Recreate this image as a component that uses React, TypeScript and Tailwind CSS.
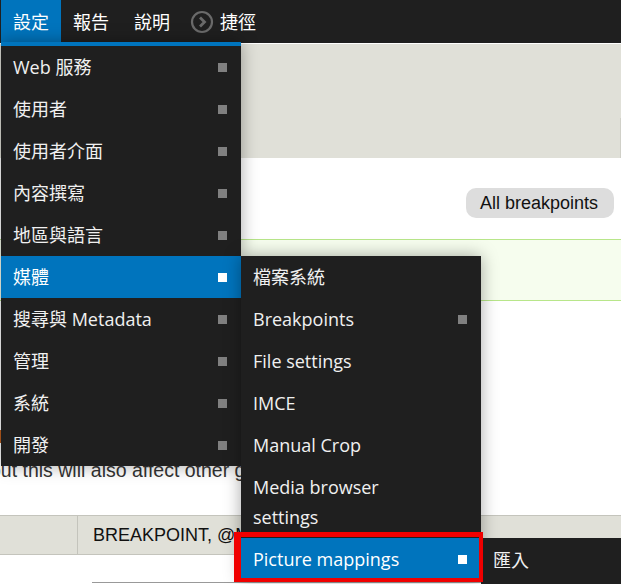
const font = "font-['Open_Sans','Noto_Sans_CJK_TC',sans-serif]";

const mainMenu = [
  { name: 'Web 服務', more: true },
  { name: '使用者', more: true },
  { name: '使用者介面', more: true },
  { name: '內容撰寫', more: true },
  { name: '地區與語言', more: true },
  { name: '媒體', more: true, active: true },
  { name: '搜尋與 Metadata', more: true },
  { name: '管理', more: true },
  { name: '系統', more: true },
  { name: '開發', more: true },
];

const mediaMenu = [
  { name: '檔案系統' },
  { name: 'Breakpoints', more: true },
  { name: 'File settings' },
  { name: 'IMCE' },
  { name: 'Manual Crop' },
  { name: 'Media browser settings' },
  { name: 'Picture mappings', more: true, active: true },
];

function MenuItem({ name, more, active }: { name: string; more?: boolean; active?: boolean }) {
  return (
    <div className={`flex items-center justify-between pl-3 pr-[14px] py-[6px] text-[18px] leading-[30px] text-[#f0f0f0] ${active ? 'bg-[#0074bd] text-white' : ''}`}>
      <span className="max-w-[190px]">{name}</span>
      {more && <span className={`size-[9px] shrink-0 ${active ? 'bg-white' : 'bg-[#808080]'}`} />}
    </div>
  );
}

export default function App() {
  return (
    <div className="relative h-[584px] overflow-hidden bg-white font-['Liberation_Sans',sans-serif] text-[18px] text-[#111]">
      {/* Toolbar */}
      <div className={`flex h-[43px] items-start bg-[#1f1f1f] pl-px text-[18px] leading-[44px] text-white ${font}`}>
        <div className="h-[42px] w-[60px] bg-[#0074bd] text-center">設定</div>
        <div className="ml-3">報告</div>
        <div className="ml-[25px]">說明</div>
        <svg className="ml-[20px] mt-[10px]" width="24" height="24" viewBox="0 0 24 24" fill="none" stroke="#6a6a6a">
          <circle cx="12" cy="12" r="10" strokeWidth="2.2" />
          <path d="M10 7.5l4.5 4.5-4.5 4.5" strokeWidth="2.8" />
        </svg>
        <div className="ml-[6px]">捷徑</div>
      </div>

      {/* Page behind the menus */}
      <div className="mt-px flex h-[114px] items-end justify-end bg-[#e0e0d8]">
        <div className="h-[40px] w-px bg-[#d0d0c8]" />
      </div>
      <div className="flex justify-end pt-[30px] pr-[7px]">
        <div className="flex h-[30px] w-[148px] items-center justify-center rounded-[10px] bg-[#dddddd] pr-[2px]">All breakpoints</div>
      </div>
      <div className="mt-[21px] h-[62px] border-y border-[#b8e68a] bg-[#f6fdee]" />
      <div className="mt-[129px] h-[13px] w-px bg-[#c06020]" />
      <div className="mt-[15px] -ml-[10px] w-[640px] whitespace-nowrap text-[19.5px] leading-[24px] text-[#333]">but this will also affect other groups</div>
      <div className="mt-[33px] flex h-[40px] items-center border-y border-[#c4c4bc] bg-[#e0e0d8]">
        <div className="h-full w-[78px] border-r border-[#c4c4bc]" />
        <div className="pl-[15px]">BREAKPOINT, @MEDIA</div>
      </div>
      <div className="ml-[92px] mt-[27px] border-t border-[#999]" />

      {/* Dropdown */}
      <div className={`absolute left-px top-[42px] w-[240px] border-t-4 border-[#0074bd] bg-[#1f1f1f] shadow-[0_0_16px_rgba(0,0,0,0.35)] ${font}`}>
        {mainMenu.map((item) => (
          <MenuItem key={item.name} {...item} />
        ))}
      </div>

      {/* Media submenu */}
      <div className={`absolute left-[241px] top-[256px] w-[240px] bg-[#1f1f1f] shadow-[0_0_16px_rgba(0,0,0,0.35)] ${font}`}>
        {mediaMenu.map((item) => (
          <MenuItem key={item.name} {...item} />
        ))}
      </div>

      {/* Third level */}
      <div className={`absolute left-[481px] top-[538px] h-[46px] w-[140px] bg-[#1f1f1f] pl-3 text-[18px] leading-[44px] text-[#f0f0f0] ${font}`}>匯入</div>

      {/* Highlight box */}
      <div className="absolute left-[234px] top-[532px] h-[50px] w-[249px] border-t-[5px] border-r-4 border-b-4 border-l-[7px] border-[#f00000]" />
    </div>
  );
}
